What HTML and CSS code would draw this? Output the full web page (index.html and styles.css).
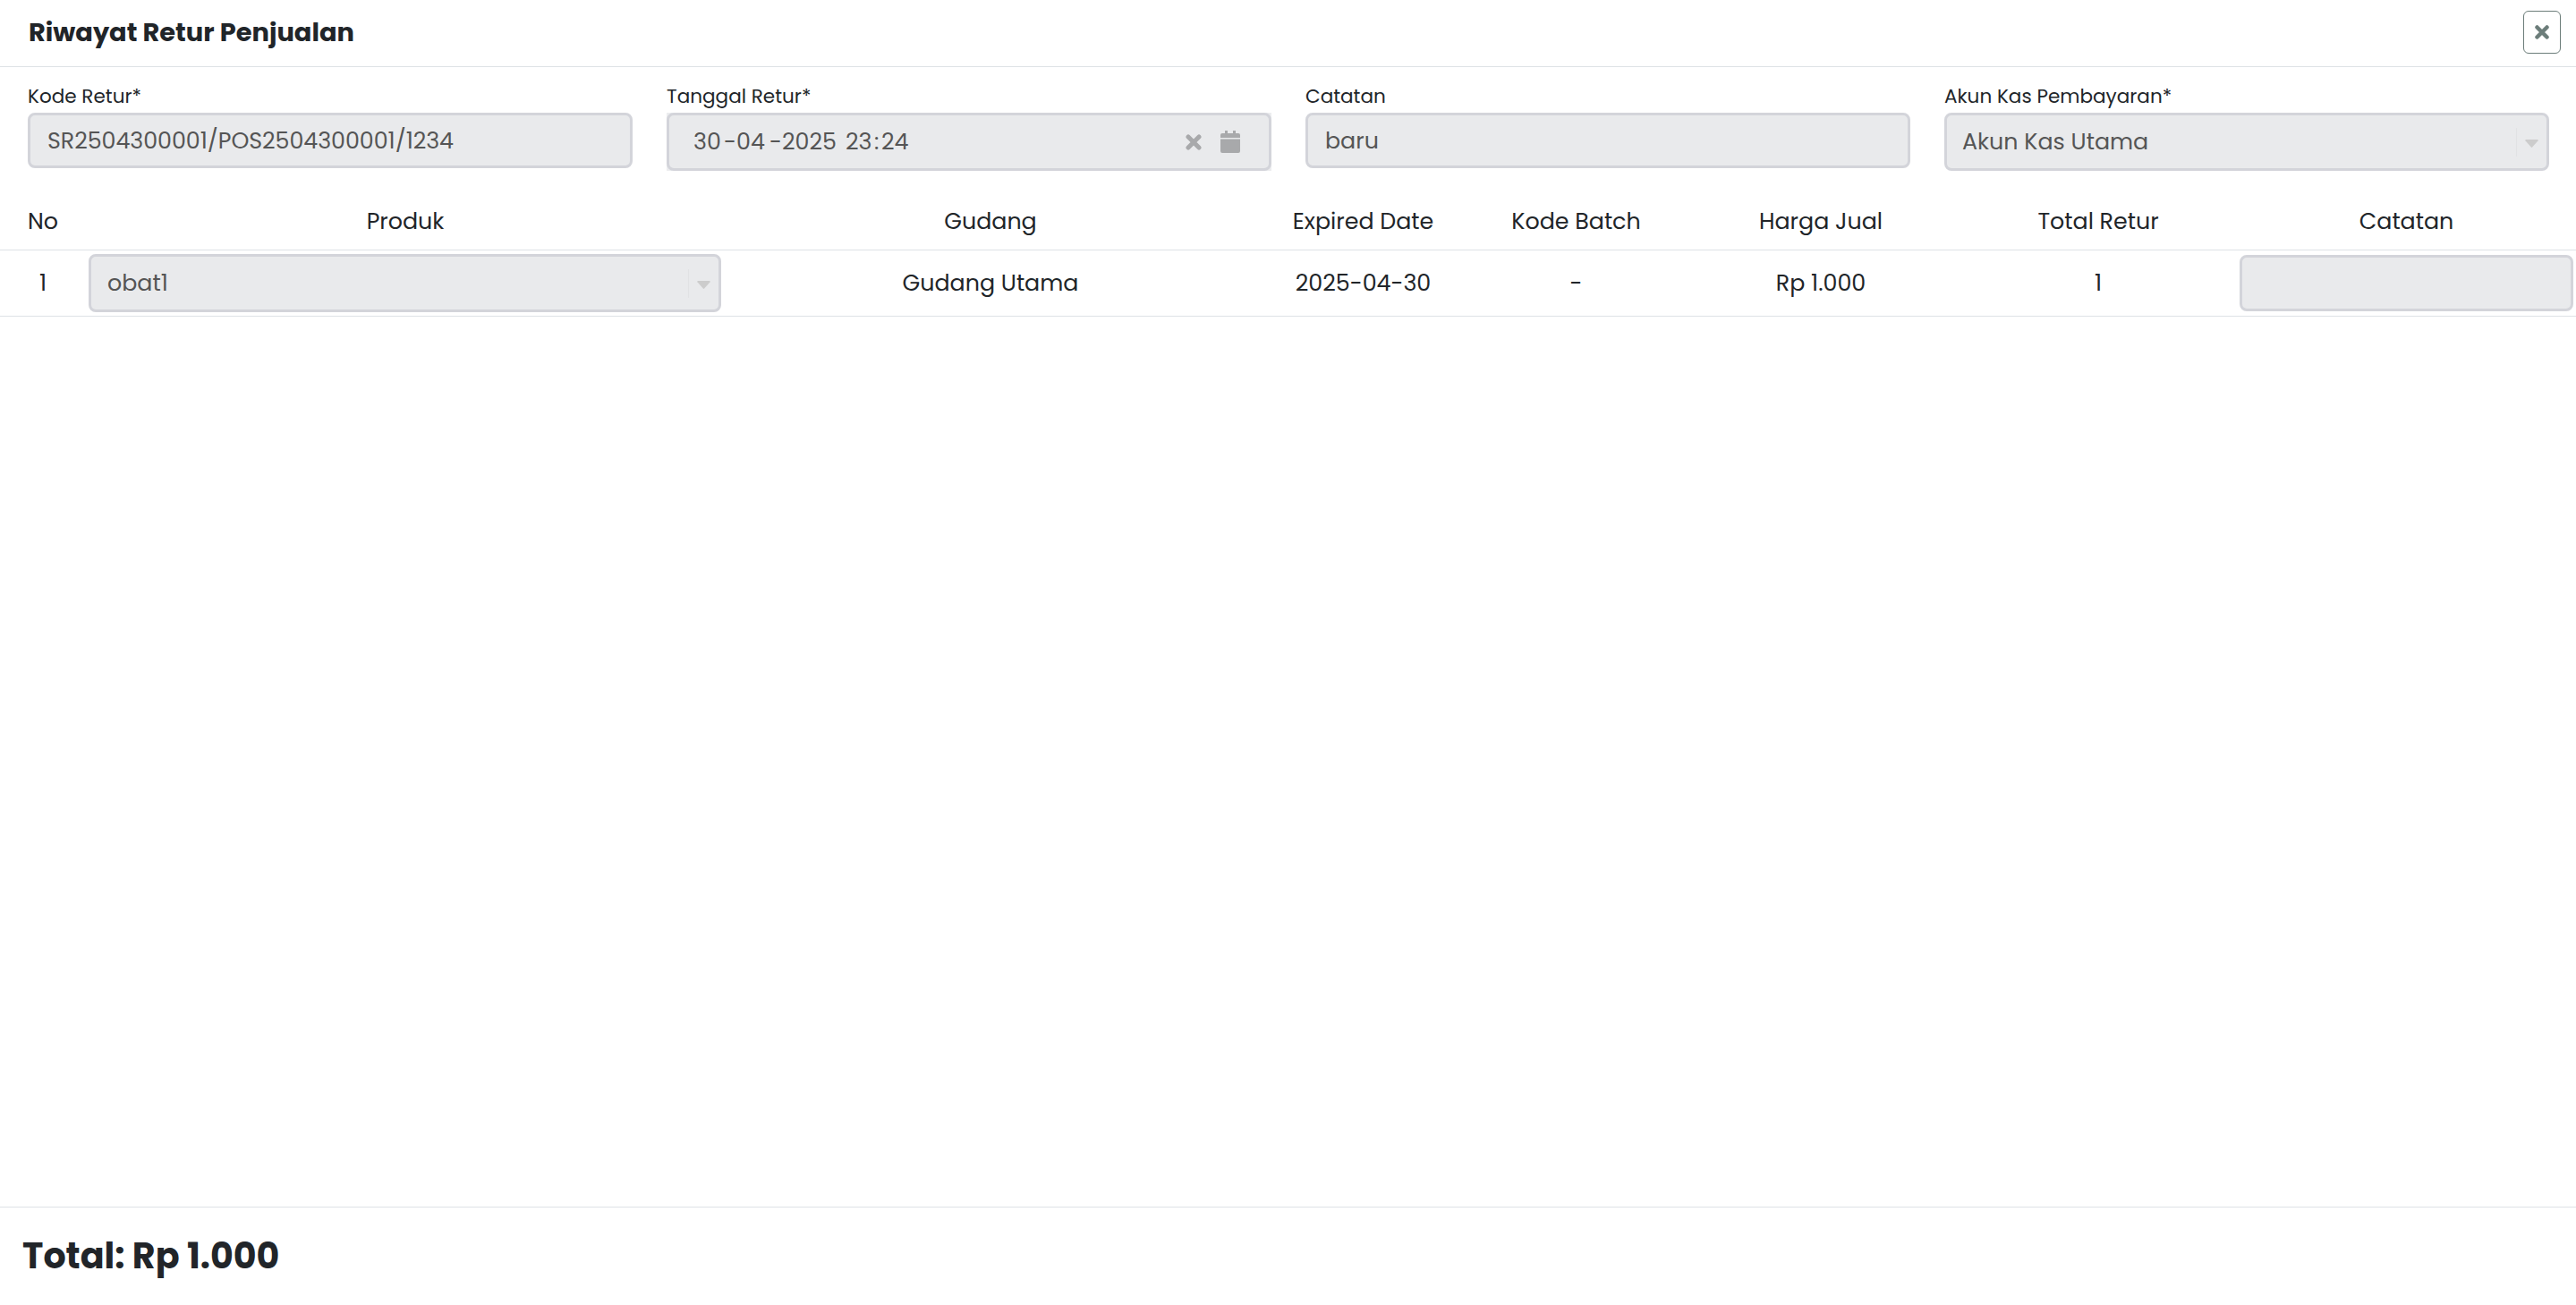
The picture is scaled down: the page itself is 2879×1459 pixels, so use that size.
FILE: index.html
```html
<!DOCTYPE html>
<html lang="id">
<head>
  <meta charset="utf-8">
  <title>Riwayat Retur Penjualan</title>
  <link rel="stylesheet" href="styles.css">
</head>
<body>

<div class="modal-header">
  <h5 class="modal-title">Riwayat Retur Penjualan</h5>
  <button class="btn-close" type="button">
    <svg width="16" height="16" viewBox="0 0 16 16"><path d="M2.5 2.5L13.5 13.5M13.5 2.5L2.5 13.5"/></svg>
  </button>
</div>

<div class="form-row">
  <div class="form-group">
    <label>Kode Retur*</label>
    <div class="field code">SR2504300001/POS2504300001/1234</div>
  </div>
  <div class="form-group">
    <label>Tanggal Retur*</label>
    <div class="date-wrap">
      <div class="field tall date">
        <span class="day">30</span><span class="dash">-</span><span class="month">04</span><span class="dash">-</span><span class="year">2025</span><span class="hour">23</span><span class="colon">:</span><span class="minute">24</span>
        <svg class="clear" width="18" height="18" viewBox="0 0 18 18"><path d="M3 3L15 15M15 3L3 15"/></svg>
        <svg class="calendar" width="22" height="26" viewBox="0 0 22 26"><path d="M5 0h3v3h6V0h3v3h3a2 2 0 0 1 2 2v3H0V5a2 2 0 0 1 2-2h3zM0 9.5h22V23a2 2 0 0 1-2 2H2a2 2 0 0 1-2-2z"/></svg>
      </div>
    </div>
  </div>
  <div class="form-group">
    <label>Catatan</label>
    <div class="field">baru</div>
  </div>
  <div class="form-group">
    <label>Akun Kas Pembayaran*</label>
    <div class="field tall select">
      <span>Akun Kas Utama</span>
      <span class="arrow"><svg width="15" height="9" viewBox="0 0 15 9"><path d="M1 0h13a.8.8 0 0 1 .6 1.3L8.2 8.6a1 1 0 0 1-1.4 0L.4 1.3A.8.8 0 0 1 1 0z"/></svg></span>
    </div>
  </div>
</div>

<table class="table">
  <colgroup>
    <col class="w-no"><col class="w-produk"><col class="w-gudang"><col class="w-expired">
    <col class="w-batch"><col class="w-harga"><col class="w-total"><col class="w-catatan">
  </colgroup>
  <thead>
    <tr>
      <th>No</th>
      <th>Produk</th>
      <th>Gudang</th>
      <th>Expired Date</th>
      <th>Kode Batch</th>
      <th>Harga Jual</th>
      <th>Total Retur</th>
      <th>Catatan</th>
    </tr>
  </thead>
  <tbody>
    <tr>
      <td>1</td>
      <td class="td-select">
        <div class="field tall select">
          <span>obat1</span>
          <span class="arrow"><svg width="15" height="9" viewBox="0 0 15 9"><path d="M1 0h13a.8.8 0 0 1 .6 1.3L8.2 8.6a1 1 0 0 1-1.4 0L.4 1.3A.8.8 0 0 1 1 0z"/></svg></span>
        </div>
      </td>
      <td>Gudang Utama</td>
      <td>2025-04-30</td>
      <td>-</td>
      <td>Rp 1.000</td>
      <td>1</td>
      <td class="td-input"><div class="field row-input"></div></td>
    </tr>
  </tbody>
</table>

<div class="modal-footer">
  <h3 class="grand-total">Total: Rp 1.000</h3>
</div>

</body>
</html>
```
FILE: styles.css
```css
* { box-sizing:border-box; }
body { margin:0; height:100vh; display:flex; flex-direction:column; background:#fff; color:#212529; font-family:Poppins, Inter, sans-serif; font-size:25.33px; overflow:hidden; }

/* header */
.modal-header { height:75px; padding:0 17px 2px 32px; display:flex; align-items:center; justify-content:space-between; border-bottom:1px solid #dee2e6; flex:none; }
.modal-title { margin:0; font-size:28.85px; font-weight:700; line-height:40px; }
.btn-close { width:42px; height:48px; padding:0; display:flex; align-items:center; justify-content:center; background:#fff; border:1px solid #6c7d7a; border-radius:6px; }
.btn-close path, .clear path { fill:none; stroke:#6c7d7a; stroke-width:4.5; stroke-linecap:round; }

/* form */
.form-row { display:grid; grid-template-columns:repeat(4, 676px); gap:38px; padding:16px 30px 0 31px; height:140px; flex:none; }
label { display:block; height:35px; line-height:33px; font-size:21.55px; white-space:nowrap; }
.field { height:62px; padding:0 19px; display:flex; align-items:center; background:#e9eaec; border:3px solid #d3d4da; border-radius:8px; color:#555; white-space:nowrap; }
.code { letter-spacing:-.04px; }
.tall { height:65px; }
.date-wrap { background:#ecedef; height:65px; }
.date { padding-left:27px; padding-right:32px; }
.day { width:34px; }
.dash { width:14px; }
.month { width:37px; }
.year { width:71px; }
.hour { width:32px; }
.colon { width:8px; }
.minute { flex:1; }
.clear { margin-right:21px; }
.clear path { stroke:#a8a9ab; stroke-width:5; }
.calendar { fill:#a8a9ab; }
.select { justify-content:space-between; padding:0 9px 0 17px; }
.arrow { height:32px; padding:3px 0 0 9px; border-left:1px solid #e1e2e4; display:flex; align-items:center; fill:#ccc; }

/* table */
.table { width:100%; table-layout:fixed; border-collapse:separate; border-spacing:0; text-align:center; flex:none; }
th { height:65px; padding:1px 0 0 1px; font-weight:400; border-bottom:1px solid #dee2e6; }
td { height:74px; padding:0 0 0 1px; border-bottom:1px solid #dee2e6; }
.w-no { width:95px; }
.w-produk { width:715px; }
.w-gudang { width:593px; }
.w-expired { width:240px; }
.w-batch { width:236px; }
.w-harga { width:311px; }
.w-total { width:309px; }
.w-catatan { width:380px; }
.td-select { padding:0 4px; }
.td-select .select { padding-left:18px; }
.td-input { padding:0 3px 0 4px; }
.row-input { height:63px; }

/* footer */
.modal-footer { margin-top:auto; height:110px; padding:0 25px 1px; display:flex; align-items:center; border-top:1px solid #dee2e6; flex:none; }
.grand-total { margin:0; font-size:39.6px; font-weight:700; }
```
